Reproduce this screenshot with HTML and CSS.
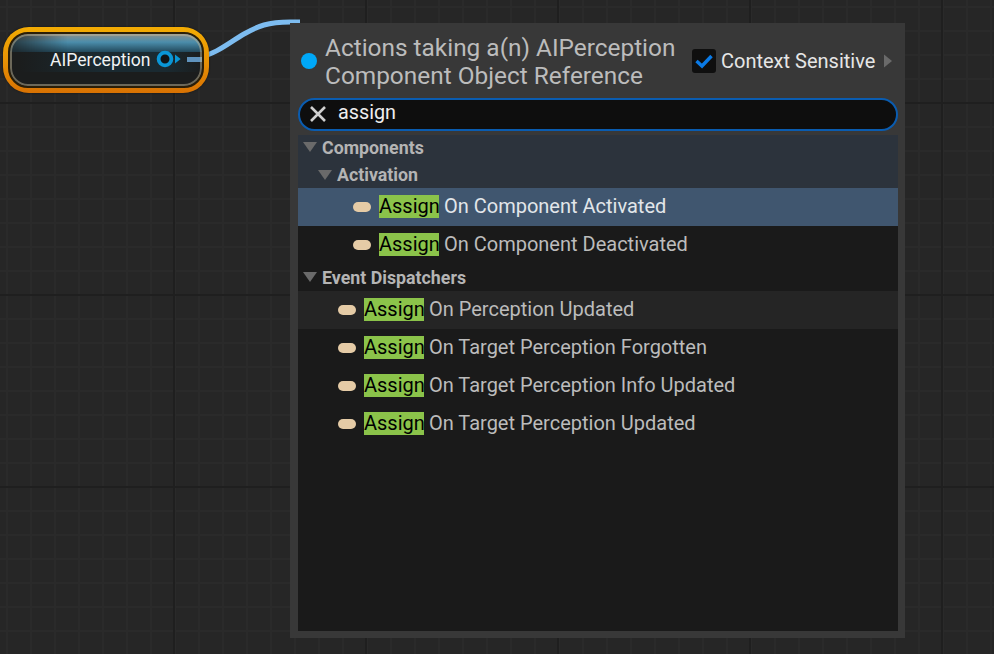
FILE: index.html
```html
<!DOCTYPE html>
<html lang="en">
<head>
<meta charset="utf-8">
<title>Blueprint context menu</title>
<link rel="stylesheet" href="styles.css">
</head>
<body>
<main class="graph">
  <svg class="wire" width="100" height="50" viewBox="0 0 100 50">
    <path class="wire-path" d="M0 42 C 16 39, 30 27, 44 19 C 58 11, 68 7, 90 7 L100 7"/>
  </svg>
  <div class="node">
    <div class="node-inner">
      <div class="node-glow"></div>
      <div class="node-band"></div>
      <span class="node-label">AIPerception</span>
      <svg class="pin" width="26" height="20" viewBox="0 0 26 20">
        <circle class="pin-ring" cx="9" cy="10" r="6.4"/>
        <path class="pin-arrow" d="M19 5.5 L24.6 10 L19 14.5Z"/>
      </svg>
      <span class="node-stub"></span>
    </div>
  </div>
  <section class="menu">
    <header class="menu-head">
      <span class="menu-dot"></span>
      <h1 class="menu-title">Actions taking a(n) AIPerception<br>Component Object Reference</h1>
      <div class="context">
        <span class="check">
          <svg width="20" height="16" viewBox="0 0 20 16"><path class="check-mark" d="M2.5 8 L8 13 L17.5 3"/></svg>
        </span>
        <span class="context-label">Context Sensitive</span>
        <svg class="context-arrow" width="10" height="14" viewBox="0 0 10 14"><path d="M1 0.5 L9 7 L1 13.5Z"/></svg>
      </div>
    </header>
    <div class="search">
      <svg class="search-x" width="18" height="18" viewBox="0 0 18 18"><path d="M2 2 L16 16 M16 2 L2 16"/></svg>
      <span class="search-text">assign</span>
    </div>
    <div class="list">
      <div class="band">
        <div class="cat cat-top"><span class="tri"></span>Components</div>
        <div class="cat cat-sub"><span class="tri"></span>Activation</div>
      </div>
      <div class="row row-deep row-selected"><span class="pill"></span><span class="text"><mark>Assign</mark> On Component Activated</span></div>
      <div class="row row-deep"><span class="pill"></span><span class="text"><mark>Assign</mark> On Component Deactivated</span></div>
      <div class="cat cat-top cat-plain"><span class="tri"></span>Event Dispatchers</div>
      <div class="row row-hover"><span class="pill"></span><span class="text"><mark>Assign</mark> On Perception Updated</span></div>
      <div class="row"><span class="pill"></span><span class="text"><mark>Assign</mark> On Target Perception Forgotten</span></div>
      <div class="row"><span class="pill"></span><span class="text"><mark>Assign</mark> On Target Perception Info Updated</span></div>
      <div class="row"><span class="pill"></span><span class="text"><mark>Assign</mark> On Target Perception Updated</span></div>
    </div>
  </section>
</main>
</body>
</html>
```
FILE: styles.css
```css
* { box-sizing: border-box; }
html, body { margin: 0; height: 100%; }
body { font-family: Roboto, "Liberation Sans", sans-serif; overflow: hidden; }

.graph {
  position: relative;
  width: 994px;
  height: 654px;
  overflow: hidden;
  background-color: #262626;
  background-image:
    linear-gradient(90deg, #1f1f1f 0 2px, transparent 2px),
    linear-gradient(180deg, #1f1f1f 0 2px, transparent 2px),
    linear-gradient(90deg, #2a2a2a 0 2px, transparent 2px),
    linear-gradient(180deg, #2a2a2a 0 2px, transparent 2px);
  background-size: 192px 100%, 100% 192px, 24px 100%, 100% 24px;
  background-position: 173px 0, 0 102px, 6px 0, 0 6px;
}

.wire { position: absolute; left: 200px; top: 15px; }
.wire-path { fill: none; stroke: #7dbcf0; stroke-width: 5; }

.node {
  position: absolute;
  left: 3px;
  top: 27px;
  width: 206px;
  height: 66px;
  padding: 5px;
  border-radius: 26px;
  background: linear-gradient(180deg, #f3ac03 0%, #e89305 50%, #d87203 100%);
  box-shadow: 0 0 2px rgba(0, 0, 0, .6);
}
.node-inner {
  position: relative;
  display: flex;
  align-items: center;
  height: 100%;
  padding-left: 40px;
  border-radius: 20px;
  border: 2px solid #2a1e08;
  background: #1b1d1d;
  overflow: hidden;
}
.node-inner::after {
  content: "";
  position: absolute;
  inset: 0;
  border: 2px solid rgba(190, 180, 150, .5);
  border-radius: 18px;
}
.node-glow {
  position: absolute;
  left: 0;
  right: 0;
  top: 0;
  height: 18px;
  background: linear-gradient(180deg, #8a8f8c 0%, #4b8dab 45%, #22495c 100%);
  -webkit-mask-image: linear-gradient(90deg, rgba(0,0,0,.25) 0%, #000 30%, #000 100%);
  mask-image: linear-gradient(90deg, rgba(0,0,0,.25) 0%, #000 30%, #000 100%);
}
.node-band {
  position: absolute;
  left: 10px;
  right: 0;
  top: 18px;
  height: 20px;
  background: linear-gradient(90deg, #1b1d1d 0%, #1a2a31 45%, #1a2a31 80%, #1b1d1d 100%);
}
.node-label { position: relative; color: #f1f3f4; font-size: 17.6px; line-height: 24px; }
.pin { position: relative; margin-left: 5px; margin-bottom: 2px; flex: none; }
.pin-ring { fill: #111416; stroke: #0a96d6; stroke-width: 3.8; }
.pin-arrow { fill: #0a96d6; }
.node-stub { position: absolute; right: 0; top: 23px; width: 15px; height: 5px; background: #5f93bd; }

.menu {
  position: absolute;
  left: 290px;
  top: 23px;
  width: 615px;
  height: 615px;
  padding: 0 7px 7px 8px;
  display: flex;
  flex-direction: column;
  background: #383838;
}
.menu-head { display: flex; align-items: center; height: 75px; padding-left: 3px; }
.menu-dot { width: 16px; height: 16px; border-radius: 50%; background: #00a8f8; flex: none; margin-right: 8px; }
.menu-title { margin: 0; padding-top: 2px; width: 367px; flex: none; font-size: 24.4px; line-height: 28px; font-weight: 400; color: #bcbcbc; white-space: nowrap; }
.context { display: flex; align-items: center; }
.check {
  display: flex;
  align-items: center;
  justify-content: center;
  width: 24px;
  height: 24px;
  margin-right: 5px;
  border-radius: 3px;
  background: #0f0f0f;
}
.check-mark { fill: none; stroke: #0a7ae6; stroke-width: 3.4; }
.context-label { font-size: 20px; line-height: 24px; color: #e6e6e6; }
.context-arrow { margin-left: 8px; fill: #6a6a6a; }

.search {
  display: flex;
  align-items: center;
  height: 33px;
  padding-left: 9px;
  border: 2px solid #0a5cb0;
  border-radius: 17px;
  background: #0e0e0e;
}
.search-x { flex: none; margin-bottom: 2px; fill: none; stroke: #d0d0d0; stroke-width: 2.6; }
.search-text { margin-left: 11px; padding-bottom: 5px; font-size: 19.8px; color: #eeeeee; }

.list { flex: 1; margin-top: 4px; background: #1a1a1a; }
.band { background: #2c333c; height: 53px; }
.cat { display: flex; align-items: center; font-size: 17.8px; font-weight: 700; color: #b4b4b4; }
.cat-top { height: 26px; padding-left: 5px; padding-bottom: 2px; }
.cat-sub { height: 27px; padding-left: 20px; }
.cat-plain { height: 26px; margin-top: 1px; }
.tri {
  width: 0;
  height: 0;
  margin-right: 5px;
  border-left: 7.5px solid transparent;
  border-right: 7.5px solid transparent;
  border-top: 10px solid #6a6a6a;
}
.row { display: flex; align-items: center; height: 38px; padding-left: 40px; color: #bcbcbc; font-size: 20px; }
.row-deep { padding-left: 55px; }
.row-selected { background: #40566f; color: #e2e6ea; }
.row-hover { background: #252525; }
.pill { width: 18px; height: 10px; margin-right: 8px; border-radius: 5px; background: #e5cba6; flex: none; }
.text { white-space: pre; padding-bottom: 2px; }
mark { display: inline-block; width: 60px; height: 23px; line-height: 23px; background: #8bc34a; color: #000; }
```
